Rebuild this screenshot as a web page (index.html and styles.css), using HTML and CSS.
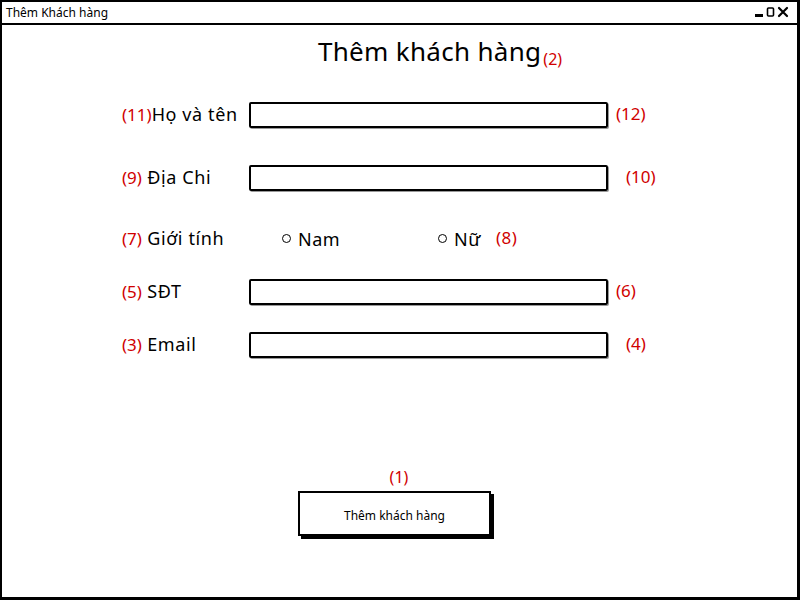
FILE: index.html
```html
<!DOCTYPE html>
<html lang="vi">
<head>
	<meta charset="UTF-8">
	<title>Thêm Khách hàng</title>
<link rel="stylesheet" href="styles.css">
</head>
<body>
	<div class="window">
		<div class="titlebar">
			<span class="wtitle">Thêm Khách hàng</span>
			<div class="wbtns">
				<svg width="40" height="14" viewBox="0 0 40 14">
					<rect x="2" y="9" width="8" height="3" fill="#000"/>
					<rect x="14.5" y="3" width="6" height="8" rx="1" fill="none" stroke="#000" stroke-width="1.6"/>
					<path d="M26 3 L34 11 M34 3 L26 11" stroke="#000" stroke-width="2.2" stroke-linecap="round"/>
				</svg>
			</div>
		</div>

		<div class="heading">
			<h1>Thêm khách hàng</h1><span class="note small">(2)</span>
		</div>

		<div class="form">
			<div class="row">
				<div class="label"><span class="note">(11)</span>Họ và tên</div>
				<div class="field"></div>
				<span class="note after">(12)</span>
			</div>
			<div class="row r2">
				<div class="label"><span class="note">(9)</span> Địa Chi</div>
				<div class="field"></div>
				<span class="note after far">(10)</span>
			</div>
			<div class="row r3">
				<div class="label"><span class="note">(7)</span> Giới tính</div>
				<div class="radios">
					<span class="radio"><i></i>Nam</span>
					<span class="radio nu"><i></i>Nữ</span>
					<span class="note">(8)</span>
				</div>
			</div>
			<div class="row r4">
				<div class="label"><span class="note">(5)</span> SĐT</div>
				<div class="field"></div>
				<span class="note after">(6)</span>
			</div>
			<div class="row r4">
				<div class="label"><span class="note">(3)</span> Email</div>
				<div class="field"></div>
				<span class="note after far">(4)</span>
			</div>
		</div>

		<div class="submit">
			<span class="note">(1)</span>
			<div class="button">Thêm khách hàng</div>
		</div>
	</div>
</body>
</html>
```

FILE: styles.css
```css
body,div,h1,span{padding: 0;margin: 0;}
body{
	background: #fff;
	font-family: "Noto Sans", sans-serif;
	color: #000;
}
.window{
	width: 800px;
	height: 600px;
	box-sizing: border-box;
	border: 2px solid #000;
	border-right-width: 3px;
	border-bottom-width: 3px;
	background: #fff;
}
.titlebar{
	height: 21px;
	border-bottom: 2px solid #000;
	display: flex;
	align-items: center;
	justify-content: space-between;
	padding: 0 4px 0 4px;
}
.wtitle{
	font-size: 12px;
}
.wbtns svg{
	display: block;
	margin-top: -2px;
}
.heading{
	display: flex;
	align-items: baseline;
	padding: 8px 0 0 316px;
	height: 48px;
}
.heading h1{
	font-size: 26px;
	font-weight: normal;
	line-height: 36px;
	letter-spacing: 0.3px;
}
.note{
	color: #d00000;
	font-size: 17px;
}
.note.small{
	font-size: 16px;
	margin-left: 2px;
	position: relative;
	top: 4px;
}
.form{
	margin-top: 21px;
	padding-left: 120px;
}
.row{
	display: flex;
	align-items: center;
	height: 26px;
}
.r2{ margin-top: 37px; }
.r3{ margin-top: 35px; }
.r4{ margin-top: 27px; }
.label{
	width: 127px;
	font-size: 18px;
	letter-spacing: 0.6px;
	white-space: nowrap;
	margin-top: -2px;
}
.label .note{ letter-spacing: 0; }
.field{
	width: 359px;
	height: 26px;
	box-sizing: border-box;
	border: 2px solid #000;
	border-radius: 2px;
	box-shadow: 1px 1px 0 #999;
}
.after{
	margin: -3px 0 0 8px;
}
.after.far{ margin-left: 18px; }
.radios{
	display: flex;
	align-items: center;
	padding-left: 33px;
	font-size: 18px;
	letter-spacing: 0.5px;
	margin-top: -1px;
}
.radio{
	display: flex;
	align-items: center;
	width: 156px;
}
.radio.nu{ width: 58px; }
.radio i{
	width: 7px;
	height: 7px;
	border: 1.5px solid #000;
	border-radius: 50%;
	margin-right: 7px;
}
.radios .note{ margin-top: -2px; }
.submit{
	margin: 109px 0 0 296px;
	width: 196px;
	display: flex;
	flex-direction: column;
	align-items: center;
}
.submit .note{
	font-size: 16px;
	line-height: 20px;
	margin-left: 6px;
}
.button{
	margin-top: 4px;
	width: 193px;
	height: 45px;
	box-sizing: border-box;
	border: 2px solid #000;
	box-shadow: 3px 3px 0 #000;
	align-self: flex-start;
	display: flex;
	align-items: center;
	justify-content: center;
	font-size: 12px;
	padding-top: 4px;
}
```
